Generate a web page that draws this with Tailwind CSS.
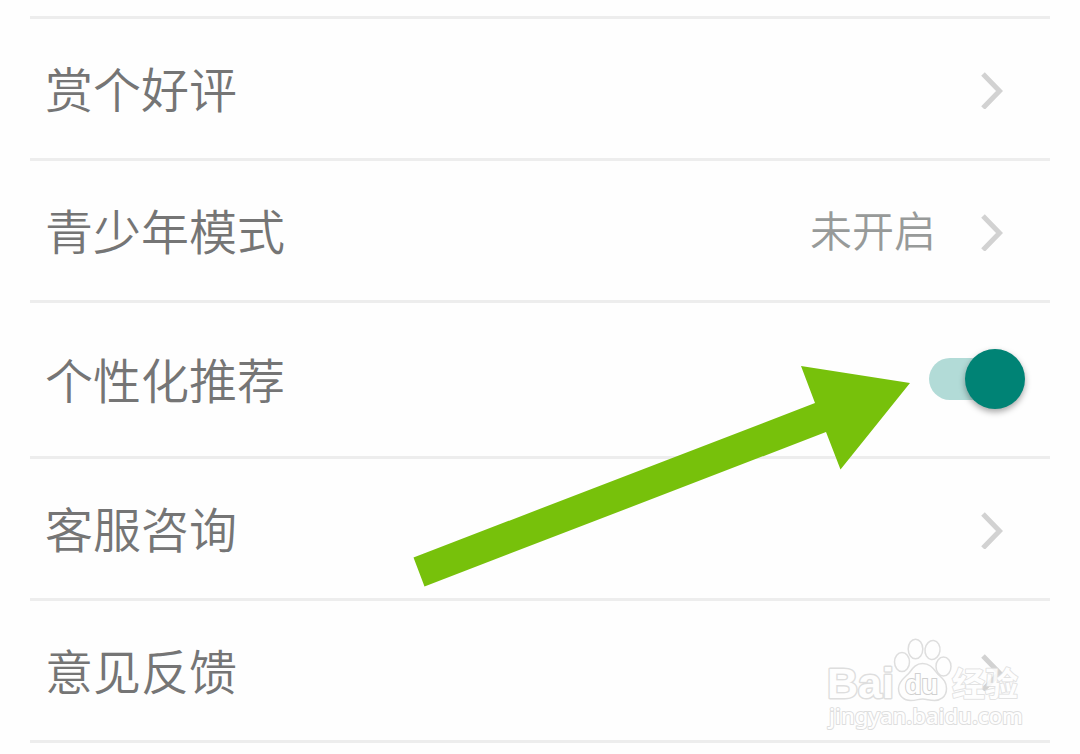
<!DOCTYPE html>
<html lang="zh-CN">
<head>
<meta charset="utf-8">
<meta name="viewport" content="width=device-width, initial-scale=1">
<title>设置</title>
<script src="https://cdn.jsdelivr.net/npm/@tailwindcss/browser@4"></script>
</head>
<body class="bg-[#fefefe] font-['Noto_Sans_CJK_SC',sans-serif] text-[#757575]">
<main class="relative overflow-hidden px-[30px] pt-4 pb-3">
  <ul class="border-t-3 border-[#ededed] text-[48px] leading-[70px] font-[350]">
    <li class="border-b-3 border-[#ededed]">
      <a href="#" class="flex h-[139px] items-center justify-between pl-[15px] pr-[46px]">
        <span class="pb-1">赏个好评</span>
        <svg class="h-10 w-6" viewBox="0 0 24 40" fill="none" stroke="#d2d2d2" stroke-width="5" aria-hidden="true"><path d="M3 5 19.500 22 3 39"/></svg>
      </a>
    </li>
    <li class="border-b-3 border-[#ededed]">
      <a href="#" class="flex h-[139px] items-center pl-[15px] pr-[46px]">
        <span class="flex-1 pb-1">青少年模式</span>
        <span class="mr-11 pb-1 text-[42px] text-[#979a99]">未开启</span>
        <svg class="h-10 w-6" viewBox="0 0 24 40" fill="none" stroke="#d2d2d2" stroke-width="5" aria-hidden="true"><path d="M3 5 19.500 22 3 39"/></svg>
      </a>
    </li>
    <li class="border-b-3 border-[#ededed]">
      <div class="flex h-[153px] items-center justify-between pl-[15px] pr-[25px]">
        <label for="recommend" class="pb-1">个性化推荐</label>
        <input id="recommend" type="checkbox" role="switch" checked class="relative h-[62px] w-24 appearance-none before:absolute before:top-[9px] before:left-0 before:h-[42px] before:w-[84px] before:rounded-full before:bg-[#b2dbd7] after:absolute after:top-0 after:right-0 after:size-[60px] after:rounded-full after:bg-[#008375] after:shadow-[0_3px_6px_rgba(0,0,0,0.35)]">
      </div>
    </li>
    <li class="border-b-3 border-[#ededed]">
      <a href="#" class="flex h-[139px] items-center justify-between pl-[15px] pr-[46px]">
        <span class="pb-1">客服咨询</span>
        <svg class="h-10 w-6" viewBox="0 0 24 40" fill="none" stroke="#d2d2d2" stroke-width="5" aria-hidden="true"><path d="M3 5 19.500 22 3 39"/></svg>
      </a>
    </li>
    <li class="border-b-3 border-[#ededed]">
      <a href="#" class="flex h-[139px] items-center justify-between pl-[15px] pr-[46px]">
        <span class="pb-1">意见反馈</span>
        <svg class="h-10 w-6" viewBox="0 0 24 40" fill="none" stroke="#d2d2d2" stroke-width="5" aria-hidden="true"><path d="M3 5 19.500 22 3 39"/></svg>
      </a>
    </li>
  </ul>

  <!-- Arrow pointing at the switch -->
  <svg class="pointer-events-none absolute top-[360px] right-[160px] h-[240px] w-[520px]" viewBox="400 360 520 240" aria-hidden="true">
    <path fill="#77c10b" d="M413.500 557.500 815 403 801 366 910 383 840.500 469.500 826 432 424.500 586.500Z"/>
  </svg>

  <!-- Watermark -->
  <svg class="pointer-events-none absolute top-[630px] right-[50px] h-[110px] w-[210px]" viewBox="820 630 210 110" role="img" aria-label="Baidu 经验">
    <g fill="#fefefe" stroke="#dedede" stroke-width="3" stroke-linejoin="round" paint-order="stroke">
      <text x="827" y="698" font-family="Liberation Sans, sans-serif" font-weight="700" font-size="43">Bai</text>
      <text x="952" y="696" font-family="Noto Sans CJK SC, sans-serif" font-weight="700" font-size="33" stroke-width="2" opacity=".85">经验</text>
      <text x="829" y="724" font-family="Noto Sans, sans-serif" font-weight="500" font-size="22" stroke-width="2">jingyan.baidu.com</text>
    </g>
    <g fill="#fefefe" stroke="#dedede" stroke-width="1.500">
      <ellipse cx="902" cy="662" rx="7.500" ry="9.500"/>
      <ellipse cx="915.500" cy="649" rx="7.300" ry="9.800"/>
      <ellipse cx="932.500" cy="650" rx="7.500" ry="9.500" transform="rotate(8 932.500 650)"/>
      <ellipse cx="943.500" cy="666.500" rx="7.500" ry="9.500"/>
      <path d="M922.500 663.500c-7 0-10 5-13 9s-11 8-11 16 6 12 12 12 8-1.500 12-1.500 7 1.500 12 1.500 12-3 12-12-6-11-10-16-7-9-14-9Z"/>
      <text x="905" y="694" font-family="Liberation Sans, sans-serif" font-weight="700" font-size="27" stroke="#d0d0d0" stroke-width="2" paint-order="stroke">du</text>
    </g>
  </svg>
</main>
</body>
</html>
